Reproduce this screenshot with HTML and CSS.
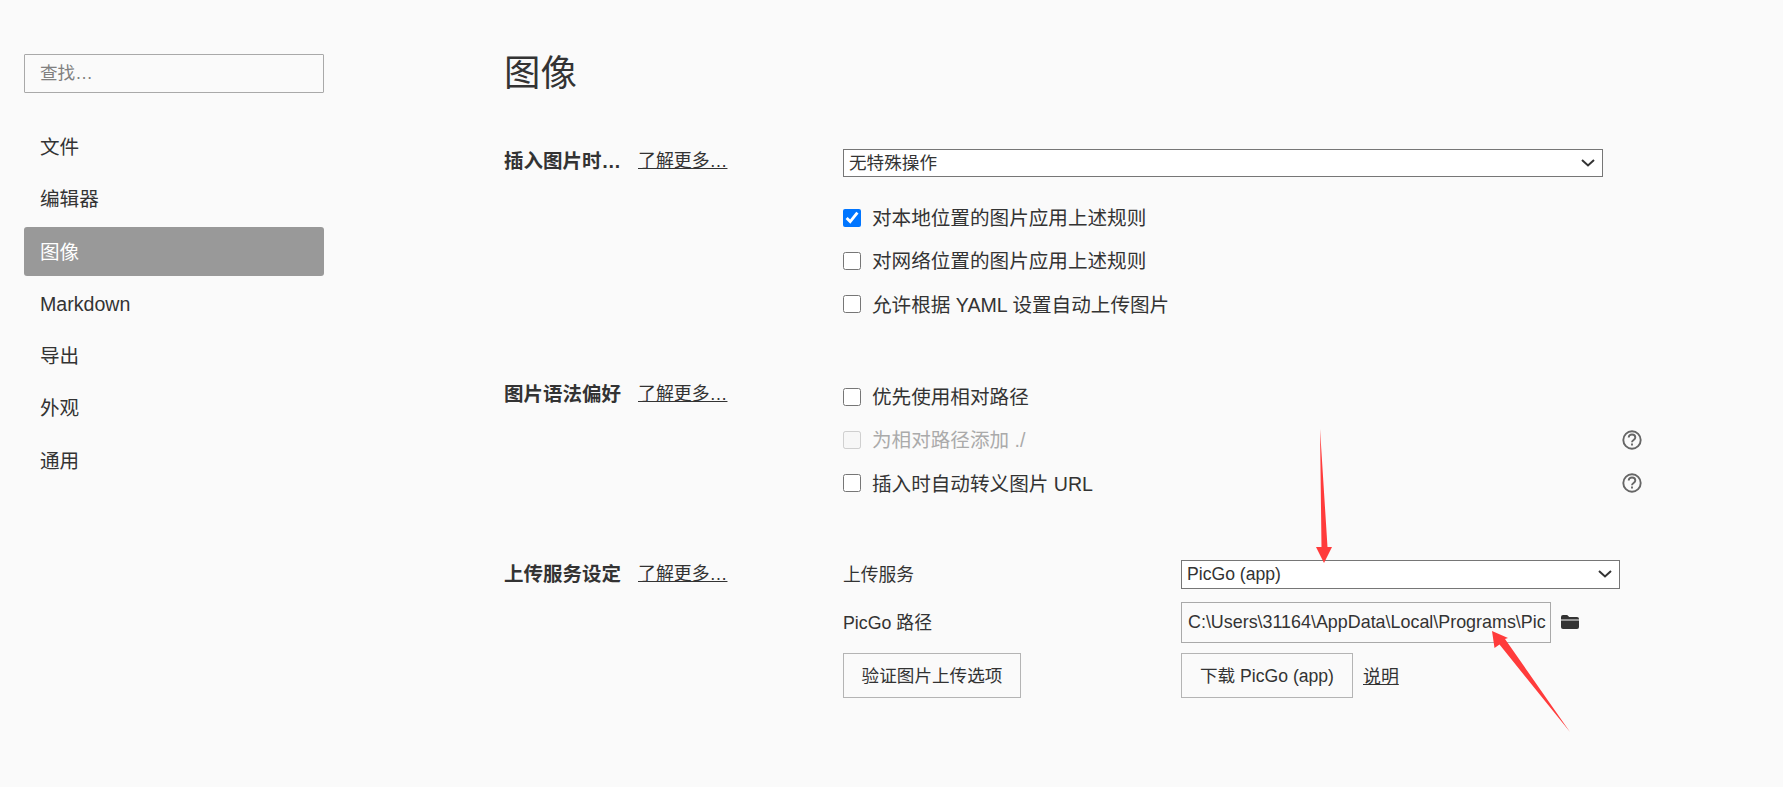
FILE: index.html
```html
<!DOCTYPE html>
<html lang="zh">
<head>
<meta charset="utf-8">
<title>偏好设置</title>
<link rel="stylesheet" href="styles.css">
</head>
<body>
<div class="app">
  <aside class="sidebar">
    <input class="search" type="text" placeholder="查找…">
    <nav class="nav">
      <a class="nav-item">文件</a>
      <a class="nav-item">编辑器</a>
      <a class="nav-item active">图像</a>
      <a class="nav-item">Markdown</a>
      <a class="nav-item">导出</a>
      <a class="nav-item">外观</a>
      <a class="nav-item">通用</a>
    </nav>
  </aside>
  <main class="main">
    <h1 class="title">图像</h1>

    <section class="section sec-insert">
      <div class="label"><b class="label-name">插入图片时…</b><a class="link">了解更多…</a></div>
      <div class="body">
        <div class="select-box select-wide">
          <select class="select"><option>无特殊操作</option></select>
          <svg class="chevron" viewBox="0 0 14 8"><path d="M1 1l6 5.5L13 1"/></svg>
        </div>
        <div class="checks">
          <label class="check"><input type="checkbox" checked><span>对本地位置的图片应用上述规则</span></label>
          <label class="check"><input type="checkbox"><span>对网络位置的图片应用上述规则</span></label>
          <label class="check"><input type="checkbox"><span>允许根据 YAML 设置自动上传图片</span></label>
        </div>
      </div>
    </section>

    <section class="section sec-syntax">
      <div class="label"><b class="label-name">图片语法偏好</b><a class="link">了解更多…</a></div>
      <div class="body">
        <div class="checks">
          <label class="check"><input type="checkbox"><span>优先使用相对路径</span></label>
          <div class="check-row">
            <label class="check disabled"><input type="checkbox" disabled><span>为相对路径添加 ./</span></label>
            <svg class="help" viewBox="0 0 20 20"><circle cx="10" cy="10" r="8.7"/><path d="M6.7 7.6c0-2 1.5-3.1 3.3-3.1s3.3 1.1 3.3 2.9c0 2.6-3.3 2.4-3.3 4.8"/><path d="M10 13.6v1.9"/></svg>
          </div>
          <div class="check-row">
            <label class="check"><input type="checkbox"><span>插入时自动转义图片 URL</span></label>
            <svg class="help" viewBox="0 0 20 20"><circle cx="10" cy="10" r="8.7"/><path d="M6.7 7.6c0-2 1.5-3.1 3.3-3.1s3.3 1.1 3.3 2.9c0 2.6-3.3 2.4-3.3 4.8"/><path d="M10 13.6v1.9"/></svg>
          </div>
        </div>
      </div>
    </section>

    <section class="section sec-upload">
      <div class="label"><b class="label-name">上传服务设定</b><a class="link">了解更多…</a></div>
      <div class="upload">
        <div class="field-name">上传服务</div>
        <div class="select-box select-service">
          <select class="select"><option>PicGo (app)</option></select>
          <svg class="chevron" viewBox="0 0 14 8"><path d="M1 1l6 5.5L13 1"/></svg>
        </div>
        <div class="field-name">PicGo 路径</div>
        <div class="path-row">
          <input class="path" type="text" value="C:\Users\31164\AppData\Local\Programs\PicGo\PicGo.exe">
          <svg class="folder" viewBox="0 0 18 14"><path d="M0 2a2 2 0 0 1 2-2h4.2l2 2H16a2 2 0 0 1 2 2v.4H0z"/><path d="M0 5.4h18V12a2 2 0 0 1-2 2H2a2 2 0 0 1-2-2z"/></svg>
        </div>
        <div><button class="btn btn-verify">验证图片上传选项</button></div>
        <div class="btn-row">
          <button class="btn btn-download">下载 PicGo (app)</button>
          <a class="link">说明</a>
        </div>
      </div>
    </section>
  </main>
</div>
<svg class="arrows" viewBox="0 0 1783 787">
  <path d="M1320 429L1321.5 547H1316L1324 563L1332 547H1327.5Z"/>
  <path d="M1492 631L1494.5 648L1499.5 644.5L1570 732L1505 639L1508 638Z"/>
</svg>
</body>
</html>
```

FILE: styles.css
```css
* { box-sizing: border-box; }
html, body { margin: 0; height: 100%; }
body {
  background: #fafafa;
  color: #333;
  font-family: "Liberation Sans", "Noto Sans CJK SC", Arial, sans-serif;
  font-size: 17.6px;
  overflow: hidden;
}
.app { display: flex; height: 787px; }
.sidebar { width: 504px; flex: none; padding: 54px 0 0 24px; }
.search {
  display: block;
  width: 300px;
  height: 39px;
  padding: 0 15px;
  border: 1px solid #a9a9a9;
  border-radius: 1px;
  background: #fafafa;
  font: inherit;
  color: #333;
  outline: none;
}
.search::placeholder { color: #808080; opacity: 1; }
.nav { display: flex; flex-direction: column; gap: 3.3px; width: 300px; margin-top: 29px; }
.nav-item {
  display: block;
  height: 49px;
  line-height: 50px;
  padding-left: 16px;
  border-radius: 3px;
  font-size: 19.6px;
  color: #333;
}
.nav-item.active { background: #999; color: #fff; }

.main { flex: 1; min-width: 0; padding-top: 50px; }
.title { margin: 0; font-size: 36.4px; font-weight: 400; line-height: 47px; }
.section { display: flex; }
.sec-insert { margin-top: 52px; }
.sec-syntax { margin-top: 49px; }
.sec-upload { margin-top: 55px; }
.label {
  flex: none;
  width: 339px;
  display: flex;
  line-height: 24px;
}
.sec-syntax .label { padding-top: 7px; }
.sec-upload .label { padding-top: 2px; }
.label-name { width: 134px; font-size: 19.5px; font-weight: 700; }
.link { color: #333; text-decoration: underline; font-size: 17.9px; }
.body { width: 799px; }
.select-box { position: relative; height: 28px; }
.select-wide { width: 760px; margin-bottom: 19px; }
.select-service { width: 439px; height: 29px; }
.select {
  display: block;
  width: 100%;
  height: 100%;
  padding: 0 0 1px 5px;
  border: 1px solid #767676;
  border-radius: 0;
  background: #fff;
  color: #333;
  font: inherit;
  appearance: none;
}
.chevron {
  position: absolute;
  right: 8px;
  top: 10px;
  width: 14px;
  height: 8px;
  fill: none;
  stroke: #333;
  stroke-width: 2;
  pointer-events: none;
}
.checks { display: flex; flex-direction: column; }
.check, .check-row { height: 43.3px; }
.check { display: flex; align-items: center; font-size: 19.6px; }
.check span { position: relative; top: -1px; }
.check input { width: 18px; height: 18px; margin: 0 11px 0 0; flex: none; accent-color: #0075ff; }
.check.disabled { color: #aaa; }
.check-row { display: flex; justify-content: space-between; align-items: center; }
.help { width: 20px; height: 20px; fill: none; stroke: #666; stroke-width: 1.9; }
.upload {
  display: grid;
  grid-template-columns: 338px auto;
  grid-template-rows: 29px 41px 45px;
  row-gap: 0;
  align-items: center;
}
.upload { grid-template-rows: auto auto auto; }
.upload > :nth-child(3), .upload > :nth-child(4) { margin-top: 13px; }
.upload > :nth-child(5), .upload > :nth-child(6) { margin-top: 10px; }
.field-name { font-size: 17.8px; padding-bottom: 2px; }
.path-row { display: flex; align-items: center; gap: 10px; }
.path {
  width: 370px;
  height: 41px;
  padding: 0 4px 0 6px;
  border: 1px solid #a9a9a9;
  background: #fafafa;
  color: #333;
  font: inherit;
  font-size: 17.9px;
  outline: none;
}
.folder { width: 18px; height: 14px; fill: #333; flex: none; }
.btn {
  display: block;
  height: 45px;
  padding: 0 0 2px;
  border: 1px solid #b4b4b4;
  border-radius: 0;
  background: #fafafa;
  color: #333;
  font: inherit;
}
.btn-verify { width: 178px; }
.btn-download { width: 172px; }
.btn-row { display: flex; align-items: center; gap: 10px; }
.arrows { position: absolute; left: 0; top: 0; width: 1783px; height: 787px; pointer-events: none; fill: #ff3b3b; }
```
